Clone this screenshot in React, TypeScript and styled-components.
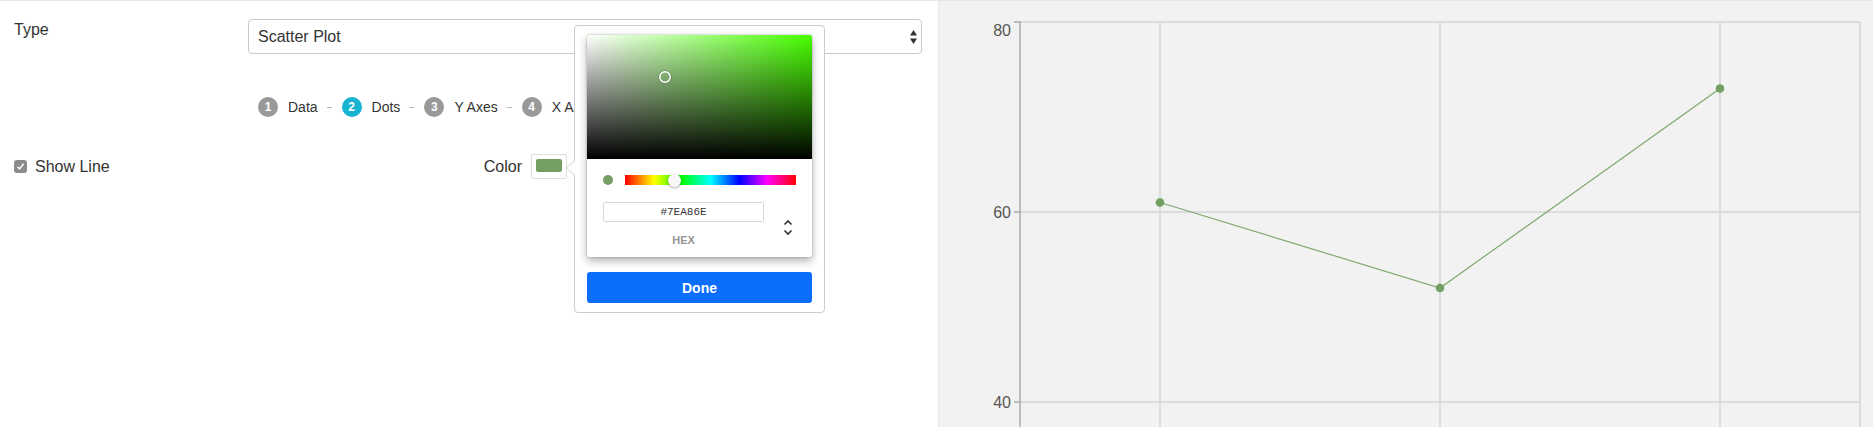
import styled, { createGlobalStyle } from 'styled-components';

const GlobalStyle = createGlobalStyle`
  html, body {
    margin: 0;
    padding: 0;
    background: #fff;
  }
  body {
    font-family: "Liberation Sans", Arial, sans-serif;
    color: #333;
  }
  * {
    box-sizing: border-box;
  }
`;

const STEPS = [
  { id: 1, label: 'Data' },
  { id: 2, label: 'Dots' },
  { id: 3, label: 'Y Axes' },
  { id: 4, label: 'X Axes' },
];

const POINTS = [61, 52, 73];
const TICKS = [80, 60, 40];

const LINE_COLOR = '#7EA86E';
const DOT_COLOR = '#739f63';

// chart geometry (svg coords)
const PLOT = { left: 81, right: 921, top: 21, unit: 9.5, max: 80 };
const yOf = (v: number) => PLOT.top + (PLOT.max - v) * PLOT.unit;
const band = (PLOT.right - PLOT.left) / POINTS.length;
const xOf = (i: number) => PLOT.left + band * (i + 0.5);

const SelectArrows = () => (
  <svg width="7" height="14" viewBox="0 0 7 14">
    <polygon points="0,5.5 3.5,0 7,5.5" fill="#333" />
    <polygon points="0,8.5 3.5,14 7,8.5" fill="#333" />
  </svg>
);

const Chevrons = () => (
  <svg width="10" height="17" viewBox="0 0 10 17">
    <path d="M1.5 5.5 L5 2 L8.5 5.5" fill="none" stroke="#333" strokeWidth="1.6" />
    <path d="M1.5 11.5 L5 15 L8.5 11.5" fill="none" stroke="#333" strokeWidth="1.6" />
  </svg>
);

const CheckMark = () => (
  <svg width="9" height="9" viewBox="0 0 9 9">
    <path d="M1.5 4.8 L3.6 7 L7.6 1.8" fill="none" stroke="#fff" strokeWidth="1.4" />
  </svg>
);

const Chart = () => (
  <svg width="935" height="426">
    {[...TICKS, 20].map((t) => (
      <line key={`h${t}`} x1={PLOT.left} x2={PLOT.right} y1={yOf(t)} y2={yOf(t)} stroke="#d4d4d4" strokeWidth="1.5" />
    ))}
    {POINTS.map((_, i) => (
      <line key={`v${i}`} x1={xOf(i)} x2={xOf(i)} y1={PLOT.top} y2={426} stroke="#d4d4d4" strokeWidth="1.5" />
    ))}
    <line x1={PLOT.right} x2={PLOT.right} y1={PLOT.top} y2={426} stroke="#d4d4d4" strokeWidth="1.5" />
    <line x1={PLOT.left} x2={PLOT.left} y1={PLOT.top - 0.75} y2={426} stroke="#aaa" strokeWidth="1.5" />
    {TICKS.map((t) => (
      <g key={`t${t}`}>
        <line x1={PLOT.left - 6} x2={PLOT.left} y1={yOf(t)} y2={yOf(t)} stroke="#aaa" strokeWidth="1.5" />
        <text
          x={PLOT.left - 9}
          y={t === PLOT.max ? yOf(t) + 14 : yOf(t) + 6}
          textAnchor="end"
          fontSize="16"
          fill="#555"
          fontFamily="Liberation Sans, Arial, sans-serif"
        >
          {t}
        </text>
      </g>
    ))}
    <polyline
      points={POINTS.map((v, i) => `${xOf(i)},${yOf(v)}`).join(' ')}
      fill="none"
      stroke={LINE_COLOR}
      strokeWidth="1.2"
    />
    {POINTS.map((v, i) => (
      <circle key={`p${i}`} cx={xOf(i)} cy={yOf(v)} r="4.3" fill={DOT_COLOR} />
    ))}
  </svg>
);

const App = () => {
  return (
    <>
      <GlobalStyle />
      <St.Page>
        <St.Editor>
          <St.Row>
            <St.Label>Type</St.Label>
            <St.Select>
              <span>Scatter Plot</span>
              <SelectArrows />
            </St.Select>
          </St.Row>

          <St.StepsRow>
            <span />
            <St.Steps>
              {STEPS.map(({ id, label }, i) => (
                <St.Step key={id}>
                  {i > 0 && <St.StepDash />}
                  <St.StepNum $active={id === 2}>{id}</St.StepNum>
                  <St.StepLabel>{label}</St.StepLabel>
                </St.Step>
              ))}
            </St.Steps>
          </St.StepsRow>

          <St.OptionsRow>
            <St.CheckField>
              <St.CheckBox>
                <CheckMark />
              </St.CheckBox>
              Show Line
            </St.CheckField>
            <St.ColorField>
              Color
              <St.SwatchWrap>
                <St.SwatchButton>
                  <St.Swatch />
                </St.SwatchButton>
                <St.Popover>
                  <St.PickerCard>
                    <St.Saturation>
                      <St.SatPointer />
                    </St.Saturation>
                    <St.PickerBody>
                      <St.HueRow>
                        <St.ColorDot />
                        <St.HueBar>
                          <St.HueThumb />
                        </St.HueBar>
                      </St.HueRow>
                      <St.FieldsRow>
                        <St.HexField>
                          <St.HexInput>#7EA86E</St.HexInput>
                          <St.HexLabel>HEX</St.HexLabel>
                        </St.HexField>
                        <St.ToggleCol>
                          <Chevrons />
                        </St.ToggleCol>
                      </St.FieldsRow>
                    </St.PickerBody>
                  </St.PickerCard>
                  <St.DoneButton>Done</St.DoneButton>
                </St.Popover>
              </St.SwatchWrap>
            </St.ColorField>
          </St.OptionsRow>
        </St.Editor>

        <St.Preview>
          <Chart />
        </St.Preview>
      </St.Page>
    </>
  );
};

export default App;

const St = {
  Page: styled.div`
    display: grid;
    grid-template-columns: 938px 1fr;
    height: 427px;
    border-top: 1px solid #e6e6e6;
    overflow: hidden;
  `,
  Editor: styled.section`
    display: flex;
    flex-direction: column;
    padding: 18px 16px 0 14px;
  `,
  Row: styled.div`
    display: grid;
    grid-template-columns: 234px 674px;
  `,
  Label: styled.div`
    font-size: 16px;
    line-height: 20px;
    padding-top: 1px;
  `,
  Select: styled.div`
    display: flex;
    align-items: center;
    justify-content: space-between;
    height: 35px;
    padding: 0 4px 0 9px;
    border: 1px solid #c9c9c9;
    border-radius: 4px;
    font-size: 16px;
    color: #333;
  `,
  StepsRow: styled.div`
    display: grid;
    grid-template-columns: 234px 674px;
    margin-top: 43px;
  `,
  Steps: styled.div`
    display: flex;
    align-items: center;
    padding-left: 10px;
  `,
  Step: styled.div`
    display: flex;
    align-items: center;
  `,
  StepDash: styled.span`
    width: 5px;
    height: 1px;
    margin: 1px 10px 0 9px;
    background: #b5b5b5;
  `,
  StepNum: styled.span<{ $active?: boolean }>`
    display: flex;
    align-items: center;
    justify-content: center;
    width: 20px;
    height: 20px;
    border-radius: 50%;
    background: ${({ $active }) => ($active ? '#17b3d0' : '#999')};
    color: #fff;
    font-size: 12px;
    font-weight: bold;
  `,
  StepLabel: styled.span`
    margin-left: 10px;
    font-size: 14px;
    color: #333;
  `,
  OptionsRow: styled.div`
    display: grid;
    grid-template-columns: 234px 319px;
    align-items: center;
    margin-top: 37px;
  `,
  CheckField: styled.label`
    display: flex;
    align-items: center;
    gap: 8px;
    font-size: 16px;
  `,
  CheckBox: styled.span`
    display: flex;
    align-items: center;
    justify-content: center;
    width: 13px;
    height: 13px;
    border-radius: 3px;
    background: #8b8b8d;
  `,
  ColorField: styled.div`
    display: flex;
    align-items: center;
    justify-content: flex-end;
    gap: 9px;
    font-size: 16px;
  `,
  SwatchWrap: styled.div`
    position: relative;
  `,
  SwatchButton: styled.div`
    width: 36px;
    height: 25px;
    padding: 4px;
    border: 1px solid #ddd;
    border-radius: 2px;
    background: #fff;
  `,
  Swatch: styled.div`
    width: 26px;
    height: 13px;
    border-radius: 2px;
    background: ${DOT_COLOR};
  `,
  Popover: styled.div`
    position: absolute;
    left: calc(100% + 7px);
    top: -129px;
    width: 251px;
    padding: 9px 12px;
    border: 1px solid #cdcdcd;
    border-radius: 4px;
    background: #fff;

    &::before,
    &::after {
      content: '';
      position: absolute;
      top: 134px;
      border-style: solid;
      border-color: transparent;
    }
    &::before {
      left: -9px;
      border-width: 8px 9px 8px 0;
      border-right-color: #cdcdcd;
    }
    &::after {
      left: -8px;
      top: 135px;
      border-width: 7px 8px 7px 0;
      border-right-color: #fff;
    }
  `,
  PickerCard: styled.div`
    width: 225px;
    border-radius: 2px;
    background: #fff;
    box-shadow: 0 0 2px rgba(0, 0, 0, 0.3), 0 4px 8px rgba(0, 0, 0, 0.3);
    overflow: hidden;
  `,
  Saturation: styled.div`
    position: relative;
    height: 124px;
    background:
      linear-gradient(to top, #000, rgba(0, 0, 0, 0)),
      linear-gradient(to right, #fff, rgba(255, 255, 255, 0)),
      #48ff00;
  `,
  SatPointer: styled.div`
    position: absolute;
    left: 34.5%;
    top: 34%;
    width: 12px;
    height: 12px;
    margin: -6px 0 0 -6px;
    border-radius: 50%;
    box-shadow: inset 0 0 0 1.5px #fff, 0 0 1px 0.5px rgba(0, 0, 0, 0.3);
  `,
  PickerBody: styled.div`
    padding: 14px 16px 10px;
  `,
  HueRow: styled.div`
    display: flex;
    align-items: center;
    gap: 12px;
    height: 14px;
  `,
  ColorDot: styled.div`
    width: 10px;
    height: 10px;
    border-radius: 50%;
    background: ${DOT_COLOR};
  `,
  HueBar: styled.div`
    position: relative;
    flex: 1;
    height: 10px;
    background: linear-gradient(
      to right,
      #f00 0%,
      #ff0 17%,
      #0f0 33%,
      #0ff 50%,
      #00f 67%,
      #f0f 83%,
      #f00 100%
    );
  `,
  HueThumb: styled.div`
    position: absolute;
    left: 28.7%;
    top: 50%;
    width: 13px;
    height: 13px;
    margin: -6.5px 0 0 -6.5px;
    border-radius: 50%;
    background: #f8f8f8;
    box-shadow: 0 1px 3px rgba(0, 0, 0, 0.35);
  `,
  FieldsRow: styled.div`
    display: flex;
    align-items: center;
    margin-top: 15px;
  `,
  HexField: styled.div`
    display: flex;
    flex-direction: column;
    align-items: center;
    width: 161px;
  `,
  HexInput: styled.div`
    width: 100%;
    height: 20px;
    border: 1px solid #d6d6d6;
    border-radius: 2px;
    font-family: "Liberation Mono", "DejaVu Sans Mono", monospace;
    font-size: 11px;
    line-height: 18px;
    text-align: center;
    color: #333;
  `,
  HexLabel: styled.div`
    margin-top: 11px;
    font-size: 11px;
    font-weight: bold;
    line-height: 14px;
    color: #969696;
  `,
  ToggleCol: styled.div`
    display: flex;
    justify-content: flex-end;
    flex: 1;
    padding: 6px 3px 0 0;
  `,
  DoneButton: styled.div`
    display: flex;
    align-items: center;
    justify-content: center;
    width: 225px;
    height: 31px;
    margin-top: 15px;
    border-radius: 3px;
    background: #0b6efd;
    color: #fff;
    font-size: 14px;
    font-weight: bold;
  `,
  Preview: styled.section`
    border-left: 1px solid #e8e8e8;
    background: #f2f2f2;
    overflow: hidden;
  `,
};
